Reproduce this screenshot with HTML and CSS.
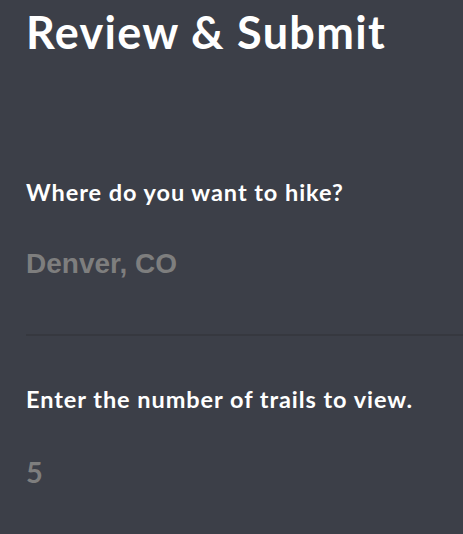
FILE: index.html
```html
<!DOCTYPE html>
<html>
<head>
<meta charset="utf-8">
<link rel="stylesheet" href="styles.css">
</head>
<body>
<main class="page">
  <h1 class="title">Review &amp; Submit</h1>
  <section class="field">
    <h2 class="label">Where do you want to hike?</h2>
    <p class="value value-text">Denver, CO</p>
  </section>
  <hr class="divider">
  <section class="field">
    <h2 class="label">Enter the number of trails to view.</h2>
    <p class="value value-num">5</p>
  </section>
</main>
</body>
</html>
```
FILE: styles.css
```css
html, body {
  margin: 0;
  padding: 0;
  background: #3c3f48;
  height: 100%;
}
.page {
  padding: 0 0 0 26px;
  font-family: Lato, "Open Sans", sans-serif;
  color: #ffffff;
}
.title {
  margin: 0;
  padding-top: 4px;
  font-size: 45px;
  line-height: 56px;
  font-weight: 700;
  letter-spacing: 1.3px;
}
.field {
  display: flex;
  flex-direction: column;
}
.label {
  margin: 120px 0 0 0;
  font-size: 23.5px;
  line-height: 24px;
  font-weight: 700;
  letter-spacing: 0.95px;
}
.value {
  margin: 0;
  color: #7e7e7e;
  font-weight: 700;
}
.value-text {
  margin-top: 44px;
  font-family: "Liberation Sans", Arial, sans-serif;
  font-size: 28px;
  line-height: 32px;
}
.value-num {
  margin-top: 45px;
  font-size: 29px;
  line-height: 32px;
}
.divider {
  margin: 54px 0 0 0;
  border: 0;
  height: 2px;
  background: #36383f;
}
.field + .divider + .field .label {
  margin-top: 51px;
}
```
